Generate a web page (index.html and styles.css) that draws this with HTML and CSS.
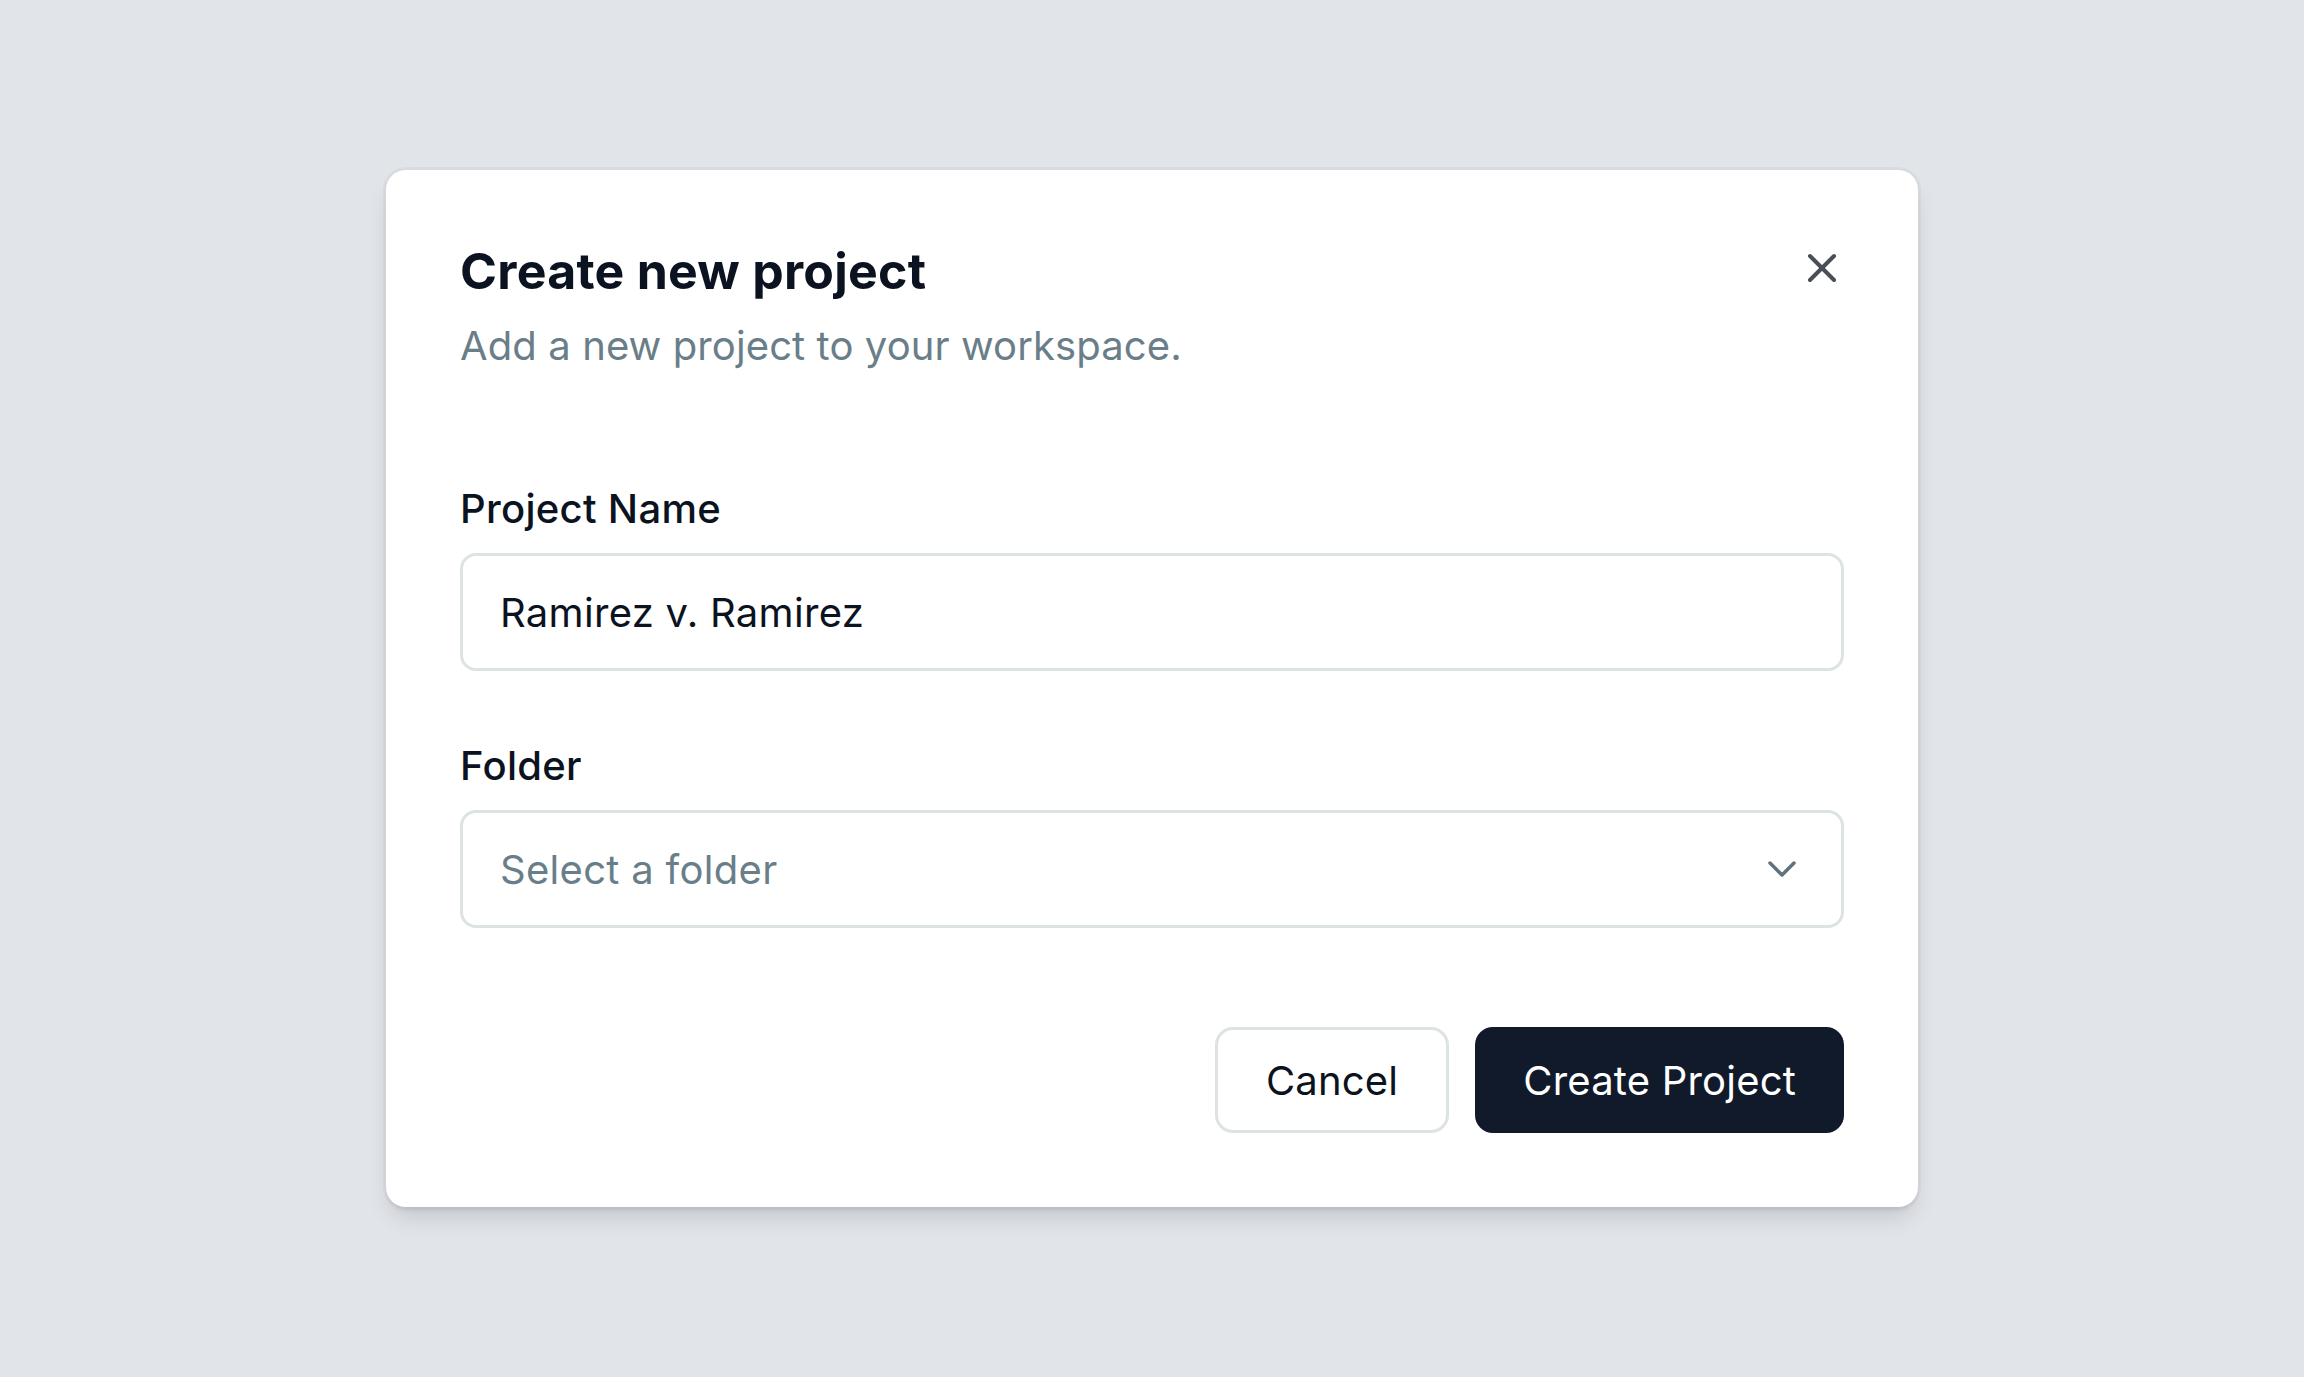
FILE: index.html
```html
<!DOCTYPE html>
<html lang="en">
<head>
<meta charset="utf-8">
<title>Create new project</title>
<link rel="stylesheet" href="styles.css">
</head>
<body>
  <main class="stage">
    <section class="dialog" role="dialog" aria-labelledby="dlg-title">
      <header class="dialog-header">
        <div class="dialog-heading">
          <h1 id="dlg-title" class="dialog-title">Create new project</h1>
          <p class="dialog-desc">Add a new project to your workspace.</p>
        </div>
        <button class="close-btn" type="button" aria-label="Close">
          <svg viewBox="0 0 24 24" width="48" height="48" fill="none" stroke="currentColor" stroke-width="2" stroke-linecap="round" stroke-linejoin="round"><path d="M18 6 6 18"/><path d="m6 6 12 12"/></svg>
        </button>
      </header>

      <form class="dialog-form">
        <div class="field field-name">
          <label class="field-label" for="pname">Project Name</label>
          <div class="control">
            <span class="control-value">Ramirez v. Ramirez</span>
          </div>
        </div>
        <div class="field field-folder">
          <label class="field-label">Folder</label>
          <div class="control control-select">
            <span class="control-placeholder">Select a folder</span>
            <svg class="chevron" viewBox="0 0 24 24" width="48" height="48" fill="none" stroke="currentColor" stroke-width="1.75" stroke-linecap="round" stroke-linejoin="round"><path d="m6 9 6 6 6-6"/></svg>
          </div>
        </div>
        <div class="dialog-actions">
          <button type="button" class="btn btn-outline">Cancel</button>
          <button type="button" class="btn btn-primary">Create Project</button>
        </div>
      </form>
    </section>
  </main>
</body>
</html>
```

FILE: styles.css
```css
* { box-sizing: border-box; }

html, body {
  margin: 0;
  padding: 0;
}

body {
  background: #e1e4e8;
  font-family: Inter, "Noto Sans", "Liberation Sans", sans-serif;
  color: #0b1220;
}

.stage {
  width: 100%;
  height: 100vh;
  display: flex;
  align-items: center;
  justify-content: center;
}

.dialog {
  width: 1532px;
  background: #ffffff;
  border-radius: 20px;
  padding: 74px;
  box-shadow:
    0 0 0 3px rgba(15, 23, 42, 0.035),
    0 14px 24px -6px rgba(15, 23, 42, 0.15),
    0 6px 10px -6px rgba(15, 23, 42, 0.11);
}

.dialog-header {
  display: flex;
  align-items: flex-start;
  justify-content: space-between;
}

.dialog-title {
  margin: 0;
  font-size: 50px;
  line-height: 54px;
  font-weight: 700;
  letter-spacing: 0.25px;
  color: #0b1220;
}

.dialog-desc {
  margin: 20px 0 0;
  font-size: 40px;
  line-height: 56px;
  letter-spacing: 0.1px;
  color: #6a7e89;
}

.close-btn {
  display: flex;
  width: 48px;
  height: 48px;
  padding: 0;
  margin-right: -2px;
  border: 0;
  background: none;
  color: #4a4f57;
  cursor: pointer;
}

.dialog-form {
  display: flex;
  flex-direction: column;
  margin-top: 107px;
}

.field {
  display: flex;
  flex-direction: column;
  gap: 16px;
}

.field-folder {
  margin-top: 67px;
}

.field-label {
  font-size: 40px;
  line-height: 56px;
  font-weight: 500;
  letter-spacing: 0.3px;
  color: #0b1220;
}

.control {
  height: 118px;
  border: 3px solid #dde2e5;
  border-radius: 16px;
  padding: 0 35px 0 37px;
  display: flex;
  align-items: center;
  font-size: 40px;
  letter-spacing: 0.3px;
}

.control-value {
  color: #0b1220;
}

.control-select {
  justify-content: space-between;
}

.control-placeholder {
  color: #6a7e89;
}

.chevron {
  color: #5f727d;
}

.dialog-actions {
  margin-top: 99px;
  display: flex;
  justify-content: flex-end;
  gap: 26px;
}

.btn {
  height: 106px;
  border-radius: 18px;
  border: 3px solid transparent;
  font-family: inherit;
  font-size: 40px;
  font-weight: 400;
  letter-spacing: 0.2px;
  cursor: pointer;
}

.btn-outline {
  padding: 0 48px;
  background: #ffffff;
  border-color: #dde2e5;
  color: #0b1220;
}

.btn-primary {
  padding: 0 45px;
  background: #111a2a;
  border-color: #111a2a;
  color: #ffffff;
}
```
